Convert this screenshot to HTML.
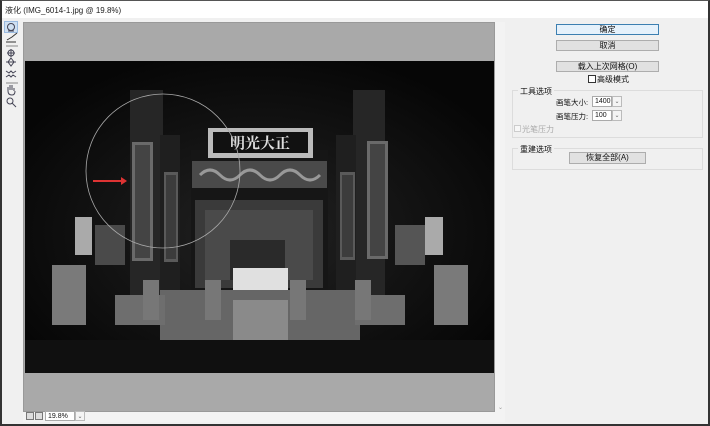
<!DOCTYPE html>
<html><head><meta charset="utf-8"><style>
*{margin:0;padding:0;box-sizing:border-box}
body{width:710px;height:426px;overflow:hidden;background:#f0f0f0;font-family:"Liberation Sans","Noto Sans CJK SC",sans-serif;font-size:8px;color:#111;position:relative}
.abs{position:absolute}
.btn{position:absolute;background:#e1e1e1;border:1px solid #adadad;text-align:center;font-size:8px;line-height:9px}
.grp{position:absolute;border:1px solid #dcdcdc}
.lbl{position:absolute;font-size:8px;white-space:nowrap}
.inp{position:absolute;background:#fff;border:1px solid #aaa;font-size:7px;line-height:9px;padding-left:2px}
.dd{position:absolute;border:1px solid #bbb;background:#f4f4f4;width:10px;height:11px;font-size:6px;text-align:center;line-height:10px;color:#666}
</style></head><body>
<div class="abs" style="left:0;top:0;width:710px;height:426px;border:2px solid #333;border-top:1px solid #555"></div>
<div class="abs" style="left:2px;top:1px;width:706px;height:17px;background:#fff"></div>
<div class="lbl" style="left:5px;top:5px;font-size:8px;color:#222">液化 (IMG_6014-1.jpg @ 19.8%)</div>
<div class="abs" style="left:4px;top:21px;width:14px;height:12px;background:#cfe0f2;border:1px solid #9bbbe0"></div>
<svg class="abs" style="left:4px;top:21px" width="16" height="90" viewBox="0 0 16 90">
<g fill="none" stroke="#445" stroke-width="1">
<circle cx="7" cy="6" r="3.5"/><path d="M4 10h6"/>
<path d="M3 19l5-3 5-4M2 21h10" stroke="#333"/>
<path d="M2 25h12" stroke="#888"/>
<circle cx="7" cy="32" r="3"/><path d="M3 32h8M7 28v8"/>
<path d="M2 41h10M7 37l3 4-3 4-3-4z"/>
<path d="M2 50l3 2 2-2 2 2 3-2M2 56l3-2 2 2 2-2 3 2"/>
<path d="M2 62h12" stroke="#888"/>
<path d="M4 70v-4M6 69v-5M8 69v-5M10 70v-3M4 70q0 4 4 4q3 0 3-4"/>
<circle cx="6" cy="80" r="3"/><path d="M8 82l4 4"/>
</g></svg>
<div class="abs" style="left:23px;top:22px;width:472px;height:390px;background:#a9a9a9;border:1px solid #999"></div>
<div class="abs" style="left:495px;top:22px;width:10px;height:390px;background:#f3f3f3"></div>
<div class="lbl" style="left:498px;top:404px;color:#999;font-size:6px">⌄</div>
<div class="abs" style="left:23px;top:412px;width:482px;height:10px;background:#f3f3f3"></div>
<svg class="abs" style="left:25px;top:61px" width="469" height="312" viewBox="25 61 469 312">
<defs><radialGradient id="g" cx="0.5" cy="0.55" r="0.6"><stop offset="0" stop-color="#222"/><stop offset="1" stop-color="#060606"/></radialGradient></defs>
<rect x="25" y="61" width="469" height="312" fill="url(#g)"/>
<rect x="130" y="90" width="33" height="215" fill="#262626"/>
<rect x="353" y="90" width="32" height="215" fill="#262626"/>
<rect x="160" y="135" width="20" height="170" fill="#1f1f1f"/>
<rect x="336" y="135" width="20" height="170" fill="#1f1f1f"/>
<rect x="191" y="150" width="137" height="140" fill="#161616"/>
<rect x="132" y="142" width="21" height="119" fill="#6a6a6a"/><rect x="135" y="145" width="15" height="113" fill="#444"/>
<rect x="164" y="172" width="14" height="90" fill="#5a5a5a"/><rect x="166" y="175" width="10" height="84" fill="#3c3c3c"/>
<rect x="367" y="141" width="21" height="118" fill="#6a6a6a"/><rect x="370" y="144" width="15" height="112" fill="#444"/>
<rect x="340" y="172" width="15" height="88" fill="#5a5a5a"/><rect x="342" y="175" width="11" height="82" fill="#3c3c3c"/>
<rect x="208" y="128" width="105" height="30" fill="#bbb"/><rect x="213" y="132" width="95" height="21" fill="#111"/>
<text x="260" y="148" fill="#ddd" font-size="15" text-anchor="middle" font-family="Noto Serif CJK SC,serif" font-weight="bold">明光大正</text>
<rect x="192" y="161" width="135" height="27" fill="#4a4a4a"/>
<path d="M200 175q10-10 20 0t20 0 20 0 20 0 20 0 20 0" stroke="#999" stroke-width="3" fill="none"/>
<rect x="195" y="200" width="128" height="88" fill="#3a3a3a"/>
<rect x="205" y="210" width="108" height="70" fill="#4a4a4a"/>
<rect x="230" y="240" width="55" height="40" fill="#2a2a2a"/>
<rect x="233" y="268" width="55" height="32" fill="#e0e0e0"/>
<rect x="160" y="290" width="200" height="52" fill="#666"/>
<rect x="233" y="300" width="55" height="42" fill="#8a8a8a"/>
<rect x="115" y="295" width="50" height="30" fill="#6e6e6e"/><rect x="355" y="295" width="50" height="30" fill="#6e6e6e"/>
<rect x="75" y="217" width="17" height="38" fill="#aaa"/><rect x="425" y="217" width="18" height="38" fill="#aaa"/>
<rect x="95" y="225" width="30" height="40" fill="#4a4a4a"/><rect x="395" y="225" width="30" height="40" fill="#555"/>
<rect x="52" y="265" width="34" height="60" fill="#7a7a7a"/><rect x="434" y="265" width="34" height="60" fill="#7a7a7a"/>
<rect x="143" y="280" width="16" height="40" fill="#777"/><rect x="205" y="280" width="16" height="40" fill="#777"/><rect x="290" y="280" width="16" height="40" fill="#777"/><rect x="355" y="280" width="16" height="40" fill="#777"/>
<rect x="25" y="340" width="469" height="33" fill="#101010"/>
<circle cx="163" cy="171" r="77" fill="none" stroke="#aaa" stroke-width="0.8"/>
<path d="M93 181h30" stroke="#d33" stroke-width="2"/><path d="M121 177l6 4-6 4z" fill="#d33"/>
</svg>
<div class="abs" style="left:26px;top:412px;width:8px;height:8px;border:1px solid #777;background:#ddd"></div>
<div class="abs" style="left:35px;top:412px;width:8px;height:8px;border:1px solid #777;background:#ddd"></div>
<div class="inp" style="left:45px;top:411px;width:30px;height:10px">19.8%</div>
<div class="dd" style="left:75px;top:411px;height:10px">⌄</div>
<div class="btn" style="left:556px;top:24px;width:103px;height:11px;border:1px solid #3c7fb1;background:#e5f1fb">确定</div>
<div class="btn" style="left:556px;top:40px;width:103px;height:11px">取消</div>
<div class="btn" style="left:556px;top:61px;width:103px;height:11px">载入上次网格(O)</div>
<div class="abs" style="left:588px;top:75px;width:8px;height:8px;border:1px solid #333;background:#fff"></div>
<div class="lbl" style="left:597px;top:74px">高级模式</div>
<div class="grp" style="left:512px;top:90px;width:191px;height:48px"></div>
<div class="lbl" style="left:518px;top:86px;background:#f0f0f0;padding:0 2px">工具选项</div>
<div class="lbl" style="left:556px;top:97px;font-size:7.5px">画笔大小:</div>
<div class="inp" style="left:592px;top:96px;width:20px;height:11px">1400</div>
<div class="dd" style="left:612px;top:96px">⌄</div>
<div class="lbl" style="left:556px;top:111px;font-size:7.5px">画笔压力:</div>
<div class="inp" style="left:592px;top:110px;width:20px;height:11px">100</div>
<div class="dd" style="left:612px;top:110px">⌄</div>
<div class="abs" style="left:514px;top:125px;width:7px;height:7px;border:1px solid #ccc;background:#f7f7f7"></div>
<div class="lbl" style="left:522px;top:124px;color:#aaa">光笔压力</div>
<div class="grp" style="left:512px;top:148px;width:191px;height:22px"></div>
<div class="lbl" style="left:518px;top:144px;background:#f0f0f0;padding:0 2px">重建选项</div>
<div class="btn" style="left:569px;top:152px;width:77px;height:12px;line-height:10px">恢复全部(A)</div>
</body></html>
